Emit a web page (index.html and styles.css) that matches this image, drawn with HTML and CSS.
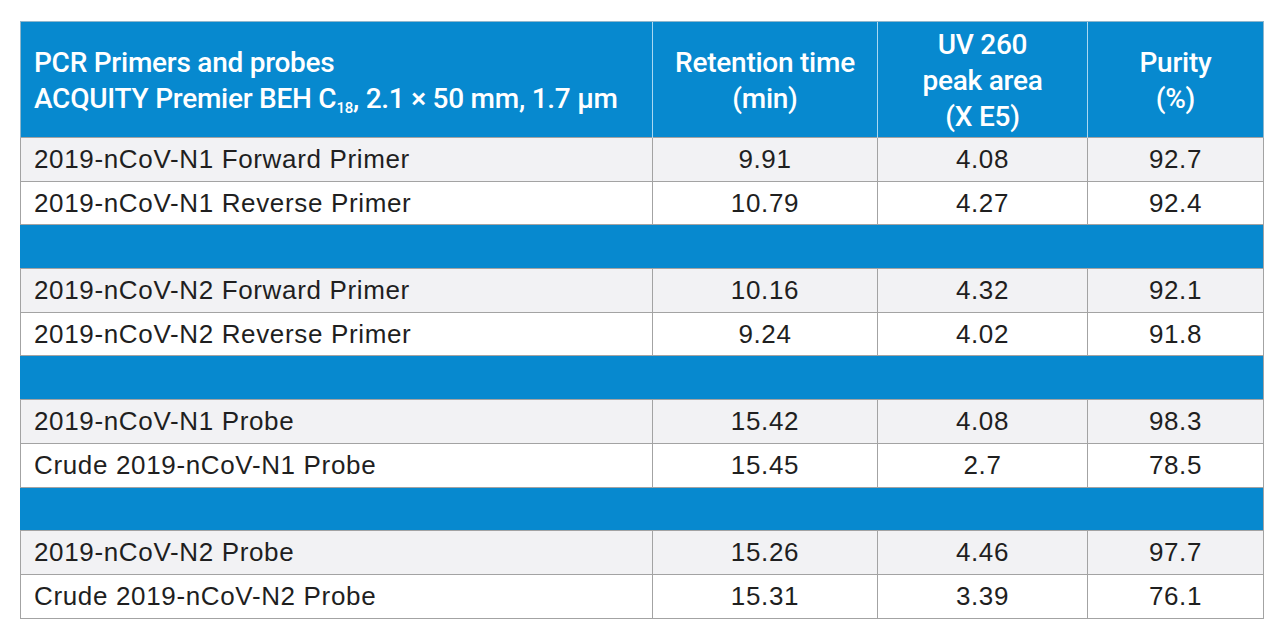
FILE: index.html
```html
<!DOCTYPE html>
<html>
<head>
<meta charset="utf-8">
<link rel="stylesheet" href="styles.css">
</head>
<body>
<table class="data">
  <colgroup>
    <col class="c1"><col class="c2"><col class="c3"><col class="c4">
  </colgroup>
  <thead>
    <tr>
      <th class="first">PCR Primers and probes<br>ACQUITY Premier BEH C<sub>18</sub>, 2.1 × 50 mm, 1.7 µm</th>
      <th>Retention time<br>(min)</th>
      <th>UV 260<br>peak area<br>(X E5)</th>
      <th>Purity<br>(%)</th>
    </tr>
  </thead>
  <tbody>
    <tr class="alt"><td>2019-nCoV-N1 Forward Primer</td><td>9.91</td><td>4.08</td><td>92.7</td></tr>
    <tr><td>2019-nCoV-N1 Reverse Primer</td><td>10.79</td><td>4.27</td><td>92.4</td></tr>
    <tr class="band"><td colspan="4"></td></tr>
    <tr class="alt"><td>2019-nCoV-N2 Forward Primer</td><td>10.16</td><td>4.32</td><td>92.1</td></tr>
    <tr><td>2019-nCoV-N2 Reverse Primer</td><td>9.24</td><td>4.02</td><td>91.8</td></tr>
    <tr class="band"><td colspan="4"></td></tr>
    <tr class="alt"><td>2019-nCoV-N1 Probe</td><td>15.42</td><td>4.08</td><td>98.3</td></tr>
    <tr><td>Crude 2019-nCoV-N1 Probe</td><td>15.45</td><td>2.7</td><td>78.5</td></tr>
    <tr class="band"><td colspan="4"></td></tr>
    <tr class="alt"><td>2019-nCoV-N2 Probe</td><td>15.26</td><td>4.46</td><td>97.7</td></tr>
    <tr><td>Crude 2019-nCoV-N2 Probe</td><td>15.31</td><td>3.39</td><td>76.1</td></tr>
  </tbody>
</table>
</body>
</html>
```
FILE: styles.css
```css
html, body {
  margin: 0;
  padding: 0;
  background: #ffffff;
}
body {
  padding: 21px 0 0 20px;
}
.data {
  border-collapse: collapse;
  table-layout: fixed;
  width: 1243px;
  font-family: "Liberation Sans", Arial, sans-serif;
  color: #1f1f1f;
}
.c1 { width: 632px; }
.c2 { width: 225px; }
.c3 { width: 210px; }
.c4 { width: 176px; }
.data th {
  background: #0789cf;
  color: #ffffff;
  font-family: Roboto, "Liberation Sans", sans-serif;
  font-weight: 500;
  font-size: 28px;
  line-height: 36px;
  letter-spacing: -0.25px;
  text-align: center;
  vertical-align: middle;
  height: 113px;
  padding: 2px 0 0;
  border-left: 1px solid #a9d8f2;
  border-top: 1px solid #8fb6cc;
}
.data th:first-child {
  border-left: 1px solid #8fb6cc;
}
.data th:last-child {
  border-right: 1px solid #8fb6cc;
}
.data th.first {
  text-align: left;
  padding-left: 13px;
}
.data sub {
  font-size: 15px;
  line-height: 0;
  vertical-align: -5px;
}
.data td {
  font-size: 26px;
  letter-spacing: 0.65px;
  height: 42.7px;
  padding: 0;
  text-align: center;
  vertical-align: middle;
  border: 1px solid #a3a3a3;
}
.data td:first-child {
  text-align: left;
  padding-left: 13px;
}
.data tr.alt td {
  background: #f2f2f4;
}
.data tr.band td {
  background: #0789cf;
  border-left-color: #0789cf;
  border-right-color: #a3a3a3;
}
```
